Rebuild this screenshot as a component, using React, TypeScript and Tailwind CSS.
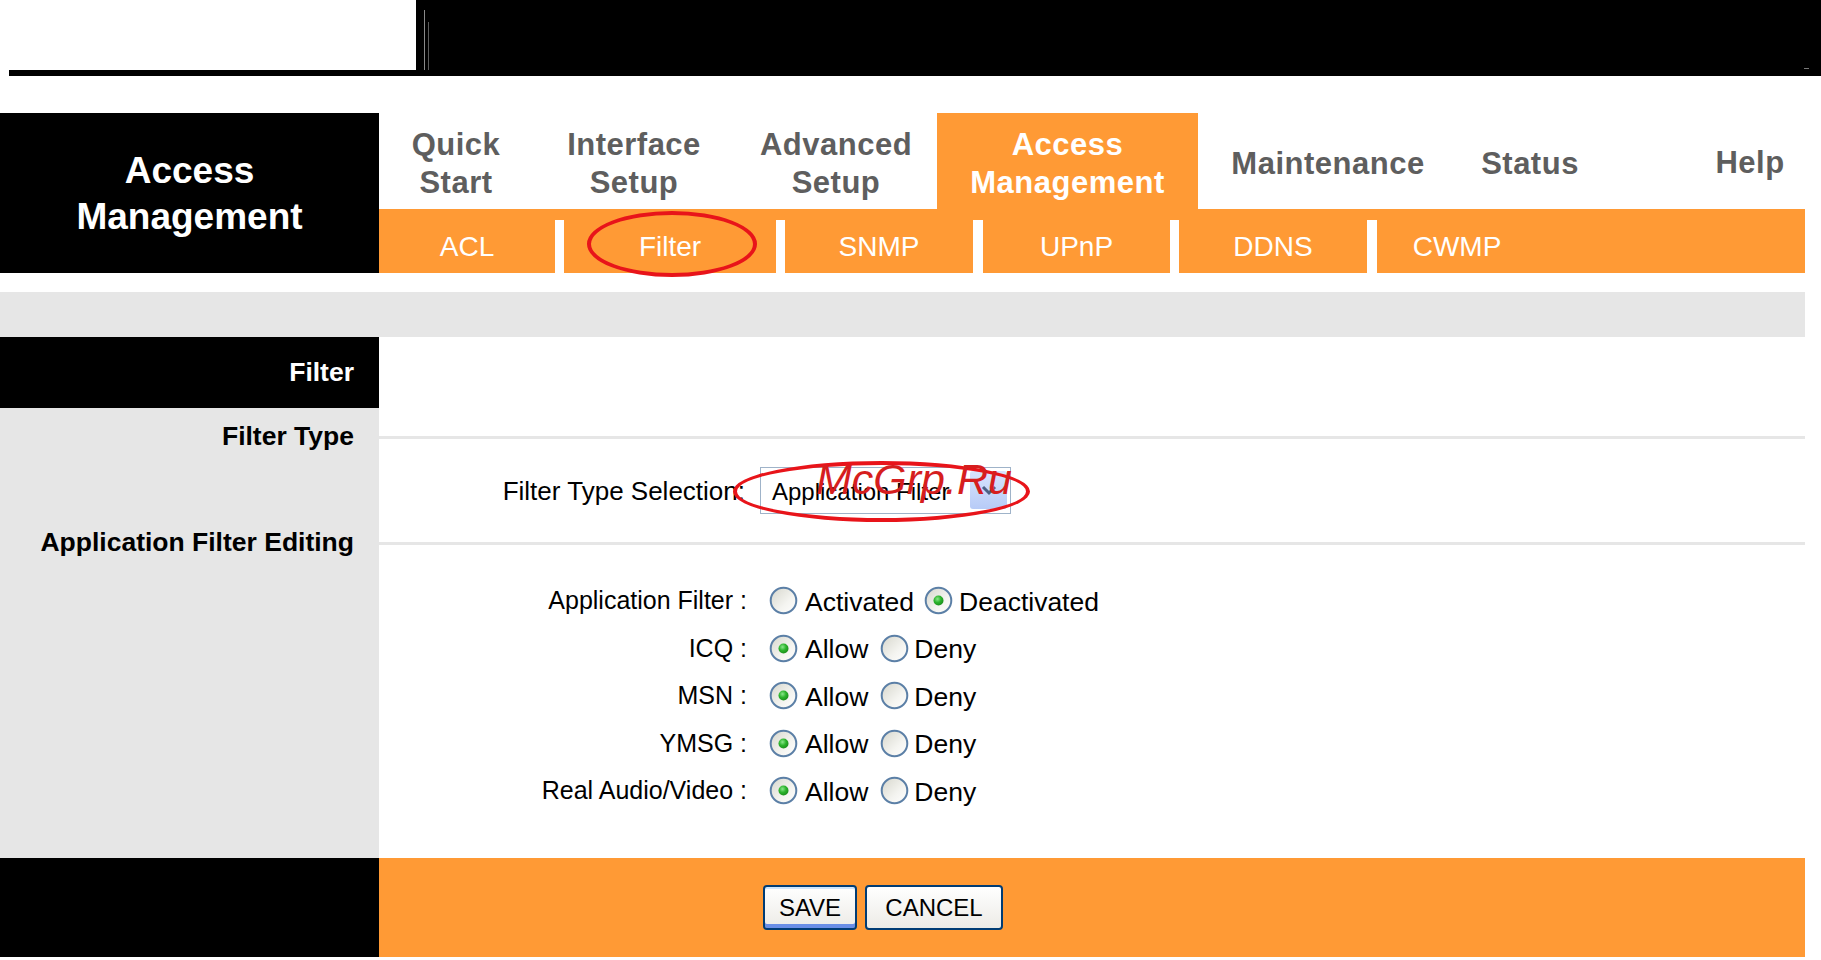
import React from "react";

const FONT = { fontFamily: '"Liberation Sans", Arial, sans-serif' };

const NAV = [
  { label: ["Quick", "Start"], w: "w-[154px]" },
  { label: ["Interface", "Setup"], w: "w-[202px]" },
  { label: ["Advanced", "Setup"], w: "w-[202px]" },
  { label: ["Access", "Management"], w: "w-[261px]", active: true },
  { label: ["Maintenance"], w: "w-[260px]" },
  { label: ["Status"], w: "w-[144px]" },
];

const SUBNAV = [
  { label: "ACL", w: "w-[176px]" },
  { label: "Filter", w: "w-[212px]" },
  { label: "SNMP", w: "w-[188px]" },
  { label: "UPnP", w: "w-[187px]" },
  { label: "DDNS", w: "w-[188px]" },
  { label: "CWMP", w: "w-[160px]" },
];

const APPS = ["ICQ", "MSN", "YMSG", "Real Audio/Video"];

function Radio({ on }: { on?: boolean }) {
  return (
    <svg width="29" height="29" viewBox="0 0 29 29" className="shrink-0">
      <defs>
        <linearGradient id="rfill" x1="0" y1="0" x2="1" y2="1">
          <stop offset="0" stopColor="#d6d6cc" />
          <stop offset="0.6" stopColor="#f4f4f0" />
          <stop offset="1" stopColor="#ffffff" />
        </linearGradient>
        <radialGradient id="rdot" cx="0.4" cy="0.35" r="0.7">
          <stop offset="0" stopColor="#8be68b" />
          <stop offset="0.5" stopColor="#2cb42c" />
          <stop offset="1" stopColor="#1a8a1a" />
        </radialGradient>
      </defs>
      <circle cx="14.5" cy="14.5" r="12.8" fill="url(#rfill)" stroke="#5b7fa6" strokeWidth="2" />
      {on && <circle cx="14.5" cy="14.5" r="5" fill="url(#rdot)" />}
    </svg>
  );
}

function Label({ text }: { text: string }) {
  return (
    <div className="flex h-[30px] w-full items-center">
      <div className="flex h-full w-[379px] shrink-0 items-center justify-end bg-[#e6e6e6] pr-[25px] text-[26.5px] font-bold text-black">
        {text}
      </div>
      <div className="flex h-full flex-1 items-center">
        <div className="h-[3px] w-full bg-[#e6e6e6]" />
      </div>
    </div>
  );
}

function Row({ left, children, h }: { left?: React.ReactNode; children?: React.ReactNode; h: string }) {
  return (
    <div className={`flex w-full ${h}`}>
      <div className="w-[379px] shrink-0 bg-[#e6e6e6]">{left}</div>
      <div className="flex flex-1 items-center bg-white">{children}</div>
    </div>
  );
}

export default function App() {
  return (
    <div className="relative h-[960px] w-[1821px] overflow-hidden bg-white" style={FONT}>
      {/* top strip */}
      <div className="flex h-[76px]">
        <div className="flex w-[416px] flex-col justify-end">
          <div className="ml-[9px] h-[6px] bg-black" />
        </div>
        <div className="relative flex-1 bg-black">
          <div className="absolute left-[8px] top-[10px] h-[60px] w-px bg-[#8a8a8a]" />
          <div className="absolute left-[12px] top-[22px] h-[48px] w-px bg-[#5a5a5a]" />
          <div className="absolute right-[12px] top-[68px] h-px w-[5px] bg-[#777]" />
        </div>
      </div>

      <div className="h-[37px]" />

      {/* header */}
      <div className="flex h-[160px] w-[1805px]">
        <div className="flex w-[379px] shrink-0 flex-col items-center justify-center bg-black pt-[2px] text-[37px] font-bold leading-[46px] text-white">
          <div>Access</div>
          <div>Management</div>
        </div>
        <div className="flex flex-1 flex-col">
          <div className="flex h-[96px]">
            {NAV.map((n) => (
              <div
                key={n.label.join(" ")}
                className={`${n.w} flex flex-col items-center justify-center pt-[5px] text-[31px] font-bold leading-[38px] tracking-[0.5px] ${
                  n.active ? "bg-[#ff9a35] text-white" : "text-[#5e5e5e]"
                }`}
              >
                {n.label.map((l) => (
                  <div key={l}>{l}</div>
                ))}
              </div>
            ))}
            <div className="flex-1" />
            <div className="flex w-[110px] items-center justify-center pt-[5px] text-[31px] font-bold tracking-[0.5px] text-[#5e5e5e]">
              Help
            </div>
          </div>
          <div className="flex h-[64px] bg-[#ff9a35]">
            {SUBNAV.map((s, i) => (
              <React.Fragment key={s.label}>
                {i > 0 && <div className={`mt-[11px] ${i === 3 || i === 5 ? "w-[10px]" : "w-[9px]"} bg-white`} />}
                <div className={`${s.w} flex items-center justify-center pt-[11px] text-[28px] text-white`}>
                  {s.label}
                </div>
              </React.Fragment>
            ))}
          </div>
        </div>
      </div>

      <div className="h-[19px]" />
      <div className="h-[45px] w-[1805px] bg-[#e6e6e6]" />

      {/* content */}
      <div className="w-[1805px]">
        <Row h="h-[71px]" left={
          <div className="flex h-full items-center justify-end bg-black pr-[25px] text-[26.5px] font-bold text-white">Filter</div>
        } />
        <Row h="h-[14px]" />
        <Label text="Filter Type" />
        <Row h="h-[76px]">
          <div className="mt-[3px] w-[368px] shrink-0 pr-[2px] text-right text-[26px] text-black">Filter Type Selection:</div>
          <div className="ml-[13px] flex h-[47px] w-[251px] items-center justify-between border border-[#9fb3c9] bg-white pl-[11px] pr-[3px] text-[24px] text-black">
            <span className="mt-[3px]">Application Filter</span>
            <div className="flex h-[38px] w-[37px] items-center justify-center rounded-[3px] bg-[linear-gradient(180deg,#d8e4fd,#b7cbf7)]">
              <svg width="16" height="12" viewBox="0 0 16 12">
                <path d="M2 3 L8 9 L14 3" fill="none" stroke="#4d6185" strokeWidth="3" />
              </svg>
            </div>
          </div>
        </Row>
        <Label text="Application Filter Editing" />
        <Row h="h-[19px]" />
        <Row h="h-[47.5px]">
          <div className="w-[368px] shrink-0 text-right text-[25px] text-black">Application Filter :</div>
          <div className="ml-[22px] flex items-center text-[26.5px] text-black">
            <Radio />
            <span className="ml-[7px] mt-[4px]">Activated</span>
            <span className="ml-[10px]"><Radio on /></span>
            <span className="ml-[6px] mt-[4px]">Deactivated</span>
          </div>
        </Row>
        {APPS.map((a) => (
          <Row key={a} h="h-[47.5px]">
            <div className="w-[368px] shrink-0 text-right text-[25px] text-black">{a} :</div>
            <div className="ml-[22px] flex items-center text-[26.5px] text-black">
              <Radio on />
              <span className="ml-[7px] mt-[4px]">Allow</span>
              <span className="ml-[12px]"><Radio /></span>
              <span className="ml-[5px] mt-[4px]">Deny</span>
            </div>
          </Row>
        ))}
        <Row h="h-[43.5px]" />

        {/* footer */}
        <div className="flex h-[99px] w-full">
          <div className="w-[379px] shrink-0 bg-black" />
          <div className="flex flex-1 items-center bg-[#ff9a35] pl-[384px]">
            <button className="h-[45px] w-[94px] rounded-[4px] border-2 border-[#003c74] bg-[linear-gradient(180deg,#ffffff,#ecebe6)] text-[24px] text-black shadow-[inset_0_2px_0_#cee7ff,inset_0_-4px_0_#6a8ee6]">
              SAVE
            </button>
            <button className="ml-[8px] h-[45px] w-[138px] rounded-[4px] border-2 border-[#003c74] bg-[linear-gradient(180deg,#ffffff,#ecebe6)] text-[24px] text-black">
              CANCEL
            </button>
          </div>
        </div>
      </div>

      {/* annotations */}
      <div className="absolute left-[587px] top-[211px] h-[66px] w-[170px] rounded-[50%] border-[4px] border-[#e8141a]" />
      <div className="absolute left-[733px] top-[461px] h-[61px] w-[297px] rounded-[50%] border-[4px] border-[#e8141a]" />
      <div className="absolute left-[816px] top-[458px] text-[43px] italic leading-none text-[#d61e1e]">McGrp.Ru</div>
    </div>
  );
}
